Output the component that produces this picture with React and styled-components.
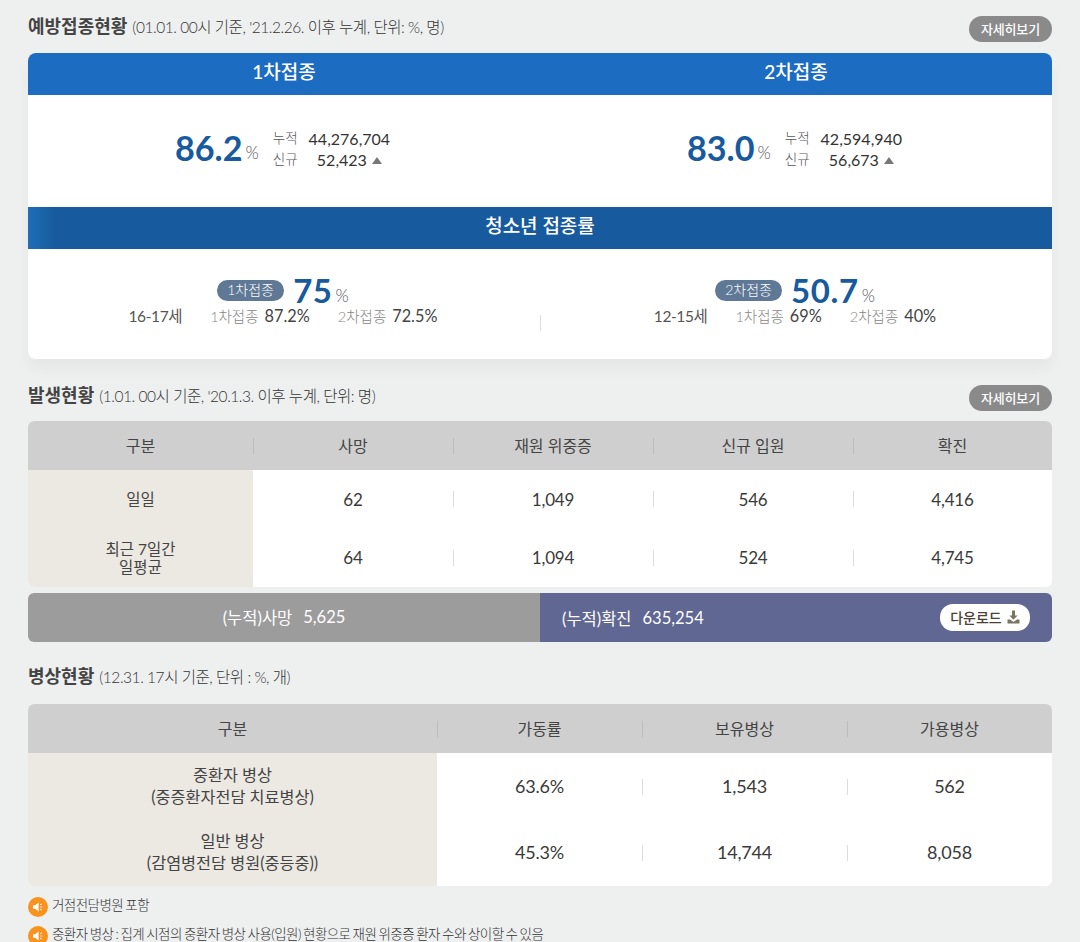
import React from 'react';
import styled, { createGlobalStyle } from 'styled-components';

const GlobalStyle = createGlobalStyle`
    html, body {
        margin: 0;
        padding: 0;
        background: #eef0f0;
    }
    body {
        font-family: Lato, 'Noto Sans CJK KR', sans-serif;
        color: #333333;
    }
`;

const Page = styled.div`
    width: 1080px;
    height: 942px;
    box-sizing: border-box;
    padding: 16px 28px 0;
    overflow: hidden;
`;
const SectionHead = styled.div`
    display: flex;
    justify-content: space-between;
    align-items: flex-start;
    height: ${(p) => p.$height}px;
    margin-top: ${(p) => p.$top || 0}px;
`;
const Title = styled.h2`
    margin: -1px 0 0;
    font-size: 18px;
    line-height: 22px;
    font-weight: 700;
    color: #444444;
    small {
        font-size: 15.5px;
        font-weight: 300;
        letter-spacing: -0.45px;
        color: #333333;
        margin-left: 5px;
    }
`;
const DetailButton = styled.button`
    width: 83px;
    height: 26px;
    padding: 0 0 2px;
    border: none;
    border-radius: 13px;
    background: #8a8a8a;
    color: #ffffff;
    font-family: inherit;
    font-size: 13px;
    font-weight: 500;
    letter-spacing: -0.2px;
`;
const Card = styled.div`
    background: #ffffff;
    border-radius: 8px;
    overflow: hidden;
    box-shadow: 0 10px 14px rgb(0 0 0 / 4%);
`;
const TwoCol = styled.div`
    display: grid;
    grid-template-columns: 1fr 1fr;
`;
const BlueHead = styled(TwoCol)`
    height: 42px;
    background: #1c6dc2;
    color: #ffffff;
    font-size: 19px;
    font-weight: 500;
    line-height: 38px;
    text-align: center;
`;
const TeenHead = styled.div`
    height: 42px;
    background: linear-gradient(90deg, #1f6eb8 0, #175b9e 26px);
    color: #ffffff;
    font-size: 19px;
    font-weight: 500;
    line-height: 38px;
    text-align: center;
`;
const StatBody = styled(TwoCol)`
    height: 112px;
`;
const StatCell = styled.div`
    display: flex;
    justify-content: center;
    align-items: flex-start;
    padding: 32px 3px 0 0;
`;
const BigNum = styled.span`
    font-size: 34.2px;
    line-height: 42px;
    font-weight: 700;
    color: #175b9e;
`;
const Unit = styled.span`
    font-size: 17px;
    line-height: 16px;
    font-weight: 300;
    color: #555555;
    margin: 18px 14px 0 3px;
`;
const StatLines = styled.div`
    display: grid;
    grid-template-columns: auto auto;
    column-gap: 11px;
    padding-top: 1px;
    font-size: 16px;
    line-height: 21px;
    color: #333333;
    font-weight: 400;
    span:nth-child(odd) {
        font-size: 13.5px;
        font-weight: 300;
        color: #555555;
    }
    span:nth-child(even) {
        text-align: center;
    }
`;
const Up = styled.i`
    display: inline-block;
    width: 0;
    height: 0;
    margin-left: 5px;
    vertical-align: 2px;
    border-left: 5px solid transparent;
    border-right: 5px solid transparent;
    border-bottom: 7px solid #777777;
`;
const TeenBody = styled(TwoCol)`
    height: 110px;
`;
const TeenCell = styled.div`
    padding-top: 26px;
    display: flex;
    flex-direction: column;
    align-items: center;
    background: ${(p) =>
        p.$divider
            ? 'linear-gradient(#dddddd, #dddddd) 0 66px / 1px 16px no-repeat'
            : 'none'};
`;
const TeenTop = styled.div`
    display: flex;
    align-items: center;
    height: 30px;
    padding-right: 2px;
`;
const Pill = styled.span`
    width: 67px;
    height: 21px;
    border-radius: 11px;
    background: #5f7896;
    color: #ffffff;
    font-size: 14px;
    font-weight: 300;
    line-height: 20px;
    text-align: center;
`;
const TeenNum = styled.span`
    font-size: 33px;
    line-height: 30px;
    font-weight: 700;
    color: #175b9e;
    letter-spacing: 0.6px;
    margin-left: 9px;
`;
const TeenUnit = styled.span`
    font-size: 17px;
    font-weight: 300;
    color: #555555;
    margin: 10px 0 0 3px;
`;
const TeenLine = styled.div`
    display: flex;
    align-items: center;
    height: 20px;
    padding-right: 2px;
    font-size: 16.3px;
    font-weight: 400;
    color: #444444;
`;
const Age = styled.span`
    margin-right: ${(p) => p.$gap}px;
    font-size: 15.5px;
    font-weight: 400;
    color: #555555;
    letter-spacing: -0.4px;
`;
const Dose = styled.span`
    font-size: 14.5px;
    font-weight: 300;
    color: #888888;
    margin-right: 6px;
    margin-left: ${(p) => p.$left || 0}px;
`;
const Table = styled.div`
    display: grid;
    grid-template-columns: ${(p) => p.$cols};
    grid-template-rows: ${(p) => p.$rows};
    border-radius: 6px;
    overflow: hidden;
    background: #ffffff;
`;
const Cell = styled.div`
    display: flex;
    align-items: center;
    justify-content: center;
    text-align: center;
    box-sizing: border-box;
    padding-bottom: ${(p) => p.$pad || 0}px;
    font-size: ${(p) => p.$size || 17}px;
    font-weight: 400;
    color: #3a3a3a;
    letter-spacing: -0.2px;
    background: ${(p) =>
        p.$first
            ? 'none'
            : 'linear-gradient(#dddddd, #dddddd) 0 center / 1px 16px no-repeat'};
`;
const HeadCell = styled(Cell)`
    font-size: 16px;
    font-weight: 400;
    color: #444444;
    letter-spacing: 0;
    padding-bottom: 2px;
    background: ${(p) =>
            p.$first
                ? 'none'
                : 'linear-gradient(#bcbcbc, #bcbcbc) 0 center / 1px 16px no-repeat'},
        #cfcfcf;
`;
const RowHead = styled.div`
    display: flex;
    align-items: center;
    justify-content: center;
    text-align: center;
    box-sizing: border-box;
    padding-bottom: ${(p) => p.$pad || 0}px;
    background: #ece9e3;
    font-size: ${(p) => p.$size}px;
    font-weight: 400;
    color: #444444;
    line-height: ${(p) => p.$lh}px;
`;
const Totals = styled.div`
    display: grid;
    grid-template-columns: 1fr 1fr;
    height: 49px;
    margin-top: 6px;
    border-radius: 6px;
    overflow: hidden;
    color: #ffffff;
    font-size: 16.5px;
    font-weight: 400;
`;
const TotalGrey = styled.div`
    display: flex;
    align-items: center;
    justify-content: center;
    gap: 11px;
    padding-bottom: 2px;
    background: #9c9c9c;
`;
const TotalBlue = styled.div`
    display: flex;
    align-items: center;
    gap: 11px;
    padding: 0 22px;
    background: #5f6792;
`;
const DownloadButton = styled.button`
    display: flex;
    align-items: center;
    justify-content: center;
    gap: 5px;
    width: 90px;
    height: 27px;
    margin-left: auto;
    padding: 0 0 2px;
    border: none;
    border-radius: 13px;
    background: #ffffff;
    color: #4a4034;
    font-family: inherit;
    font-size: 14px;
    font-weight: 500;
`;
const Notes = styled.ul`
    list-style: none;
    margin: 11px 0 0;
    padding: 0;
`;
const Note = styled.li`
    display: flex;
    align-items: flex-start;
    gap: 4px;
    height: 29px;
    font-size: 13.5px;
    line-height: 17px;
    font-weight: 300;
    color: #333333;
    letter-spacing: -0.55px;
    word-spacing: -1px;
    svg {
        flex: none;
    }
`;

const SpeakerIcon = () => (
    <svg width="20" height="20" viewBox="0 0 20 20">
        <circle cx="10" cy="10" r="10" fill="#f7931e" />
        <path d="M5 8.3h2.2L10.6 5.6v8.8L7.2 11.7H5z" fill="#ffffff" />
        <path
            d="M12.2 7.8l1.6-.9M12.4 10h1.8M12.2 12.2l1.6.9"
            stroke="#ffffff"
            strokeWidth="1"
            fill="none"
        />
    </svg>
);
const DownloadIcon = () => (
    <svg width="13" height="14" viewBox="0 0 13 14">
        <path d="M5 0.5h3v5h2.6L6.5 9.8 2.4 5.5H5z" fill="#7d7361" />
        <path d="M0.5 9.5h2.6l3.4 2.6 3.4-2.6h2.6V13.5H0.5z" fill="#7d7361" />
    </svg>
);

const vaccine = [
    { rate: '86.2', total: '44,276,704', today: '52,423' },
    { rate: '83.0', total: '42,594,940', today: '56,673' },
];
const teens = [
    { dose: '1차접종', rate: '75', age: '16-17세', a: '87.2%', b: '72.5%' },
    { dose: '2차접종', rate: '50.7', age: '12-15세', a: '69%', b: '40%' },
];
const cases = [
    { name: '일일', v: ['62', '1,049', '546', '4,416'] },
    { name: ['최근 7일간', '일평균'], v: ['64', '1,094', '524', '4,745'] },
];
const beds = [
    { name: ['중환자 병상', '(중증환자전담 치료병상)'], v: ['63.6%', '1,543', '562'] },
    { name: ['일반 병상', '(감염병전담 병원(중등중))'], v: ['45.3%', '14,744', '8,058'] },
];

const Lines = ({ name }) =>
    Array.isArray(name) ? (
        <div>
            {name[0]}
            <br />
            {name[1]}
        </div>
    ) : (
        name
    );

const App = () => (
    <Page>
        <GlobalStyle />
        <SectionHead $height={37}>
            <Title>
                예방접종현황<small>(01.01. 00시 기준, '21.2.26. 이후 누계, 단위: %, 명)</small>
            </Title>
            <DetailButton>자세히보기</DetailButton>
        </SectionHead>
        <Card>
            <BlueHead>
                <div>1차접종</div>
                <div>2차접종</div>
            </BlueHead>
            <StatBody>
                {vaccine.map((item) => (
                    <StatCell key={item.rate}>
                        <BigNum>{item.rate}</BigNum>
                        <Unit>%</Unit>
                        <StatLines>
                            <span>누적</span>
                            <span>{item.total}</span>
                            <span>신규</span>
                            <span>
                                {item.today}
                                <Up />
                            </span>
                        </StatLines>
                    </StatCell>
                ))}
            </StatBody>
            <TeenHead>청소년 접종률</TeenHead>
            <TeenBody>
                {teens.map((item, i) => (
                    <TeenCell key={item.dose} $divider={i === 1}>
                        <TeenTop>
                            <Pill>{item.dose}</Pill>
                            <TeenNum>{item.rate}</TeenNum>
                            <TeenUnit>%</TeenUnit>
                        </TeenTop>
                        <TeenLine>
                            <Age $gap={28}>{item.age}</Age>
                            <Dose>1차접종</Dose>
                            {item.a}
                            <Dose $left={28}>2차접종</Dose>
                            {item.b}
                        </TeenLine>
                    </TeenCell>
                ))}
            </TeenBody>
        </Card>

        <SectionHead $height={36} $top={26}>
            <Title>
                발생현황<small>(1.01. 00시 기준, '20.1.3. 이후 누계, 단위: 명)</small>
            </Title>
            <DetailButton>자세히보기</DetailButton>
        </SectionHead>
        <Table $cols="225px 200px 200px 200px 199px" $rows="49px 58px 59px">
            {['구분', '사망', '재원 위중증', '신규 입원', '확진'].map((h, i) => (
                <HeadCell key={h} $first={i === 0}>
                    {h}
                </HeadCell>
            ))}
            {cases.map((row) => (
                <React.Fragment key={row.v[0]}>
                    <RowHead $lh={18} $size={15.5}>
                        <Lines name={row.name} />
                    </RowHead>
                    {row.v.map((v, i) => (
                        <Cell key={v} $first={i === 0}>
                            {v}
                        </Cell>
                    ))}
                </React.Fragment>
            ))}
        </Table>
        <Totals>
            <TotalGrey>
                <span>(누적)사망</span>
                <span>5,625</span>
            </TotalGrey>
            <TotalBlue>
                <span>(누적)확진</span>
                <span>635,254</span>
                <DownloadButton>
                    다운로드
                    <DownloadIcon />
                </DownloadButton>
            </TotalBlue>
        </Totals>

        <SectionHead $height={38} $top={24}>
            <Title>
                병상현황<small>(12.31. 17시 기준, 단위 : %, 개)</small>
            </Title>
        </SectionHead>
        <Table $cols="409px 205px 205px 205px" $rows="49px 67px 66px">
            {['구분', '가동률', '보유병상', '가용병상'].map((h, i) => (
                <HeadCell key={h} $first={i === 0}>
                    {h}
                </HeadCell>
            ))}
            {beds.map((row) => (
                <React.Fragment key={row.v[0]}>
                    <RowHead $lh={22} $size={16.3} $pad={2}>
                        <Lines name={row.name} />
                    </RowHead>
                    {row.v.map((v, i) => (
                        <Cell key={v} $first={i === 0} $size={18} $pad={2}>
                            {v}
                        </Cell>
                    ))}
                </React.Fragment>
            ))}
        </Table>
        <Notes>
            <Note>
                <SpeakerIcon />
                거점전담병원 포함
            </Note>
            <Note>
                <SpeakerIcon />
                중환자 병상 : 집계 시점의 중환자 병상 사용(입원) 현황으로 재원 위중증 환자 수와 상이할 수 있음
            </Note>
        </Notes>
    </Page>
);

export default App;
